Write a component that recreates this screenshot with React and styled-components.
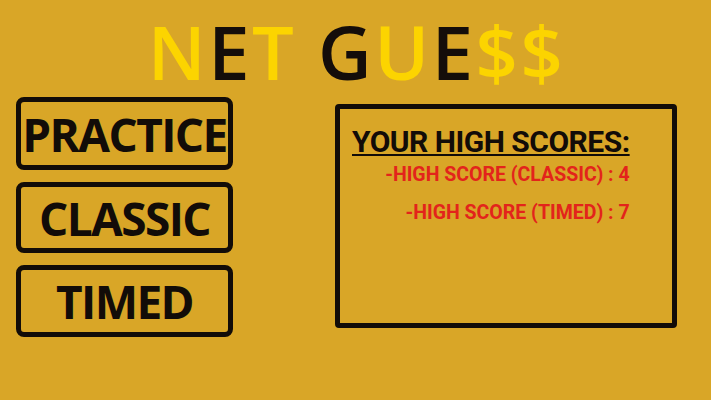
import React from "react";
import styled, { createGlobalStyle } from "styled-components";

const Global = createGlobalStyle`
  html, body { margin: 0; padding: 0; }
  body {
    background: #d9a627;
    width: 711px;
    height: 400px;
    overflow: hidden;
  }
`;

const Page = styled.div`
  display: flex;
  flex-direction: column;
  width: 711px;
  height: 400px;
  box-sizing: border-box;
  background: #d9a627;
`;

const Title = styled.h1`
  margin: 15px 0 0 0;
  padding-left: 2px;
  text-align: center;
  font-family: "Open Sans", sans-serif;
  font-weight: 600;
  font-size: 74px;
  line-height: 73px;
  letter-spacing: 2.5px;
`;

const Letter = styled.span`
  color: ${(p) => (p.$dark ? "#140d0a" : "#fcd400")};
`;

const Body = styled.div`
  display: flex;
  align-items: flex-start;
  padding-left: 16px;
  margin-top: 9px;
  gap: 102px;
`;

const Menu = styled.div`
  display: flex;
  flex-direction: column;
  gap: 12px;
  width: 217px;
`;

const MenuButton = styled.button`
  box-sizing: border-box;
  width: 217px;
  height: ${(p) => p.$h}px;
  border: 5px solid #120c08;
  border-radius: 8px;
  background: transparent;
  padding: 0;
  display: flex;
  align-items: center;
  justify-content: center;
  font-family: "Open Sans", sans-serif;
  font-weight: 700;
  font-size: 46px;
  letter-spacing: -1.6px;
  color: #120c08;
  cursor: pointer;
`;

const Panel = styled.div`
  box-sizing: border-box;
  width: 342px;
  height: 224px;
  margin-top: 7px;
  border: 5px solid #120c08;
  border-radius: 4px;
  padding: 16px 0 0 12px;
`;

const ScoreBlock = styled.div`
  display: inline-flex;
  flex-direction: column;
  align-items: flex-end;
  font-family: Roboto, sans-serif;
  font-weight: 700;
`;

const Heading = styled.div`
  font-size: 30px;
  line-height: 34px;
  letter-spacing: -0.5px;
  color: #120c08;
  text-decoration: underline;
  text-decoration-thickness: 2px;
  text-underline-offset: 2px;
`;

const ScoreLine = styled.div`
  font-size: 19.5px;
  line-height: 20px;
  letter-spacing: 0px;
  color: #e3241b;
  margin-top: ${(p) => p.$mt}px;
`;

export default function App() {
  return (
    <>
      <Global />
      <Page>
        <Title>
          <Letter>N</Letter>
          <Letter $dark>E</Letter>
          <Letter>T</Letter> <Letter $dark>G</Letter>
          <Letter>U</Letter>
          <Letter $dark>E</Letter>
          <Letter>$$</Letter>
        </Title>
        <Body>
          <Menu>
            <MenuButton $h={73}>PRACTICE</MenuButton>
            <MenuButton $h={71}>CLASSIC</MenuButton>
            <MenuButton $h={72}>TIMED</MenuButton>
          </Menu>
          <Panel>
            <ScoreBlock>
              <Heading>YOUR HIGH SCORES:</Heading>
              <ScoreLine $mt={6}>-HIGH SCORE (CLASSIC) : 4</ScoreLine>
              <ScoreLine $mt={18}>-HIGH SCORE (TIMED) : 7</ScoreLine>
            </ScoreBlock>
          </Panel>
        </Body>
      </Page>
    </>
  );
}
